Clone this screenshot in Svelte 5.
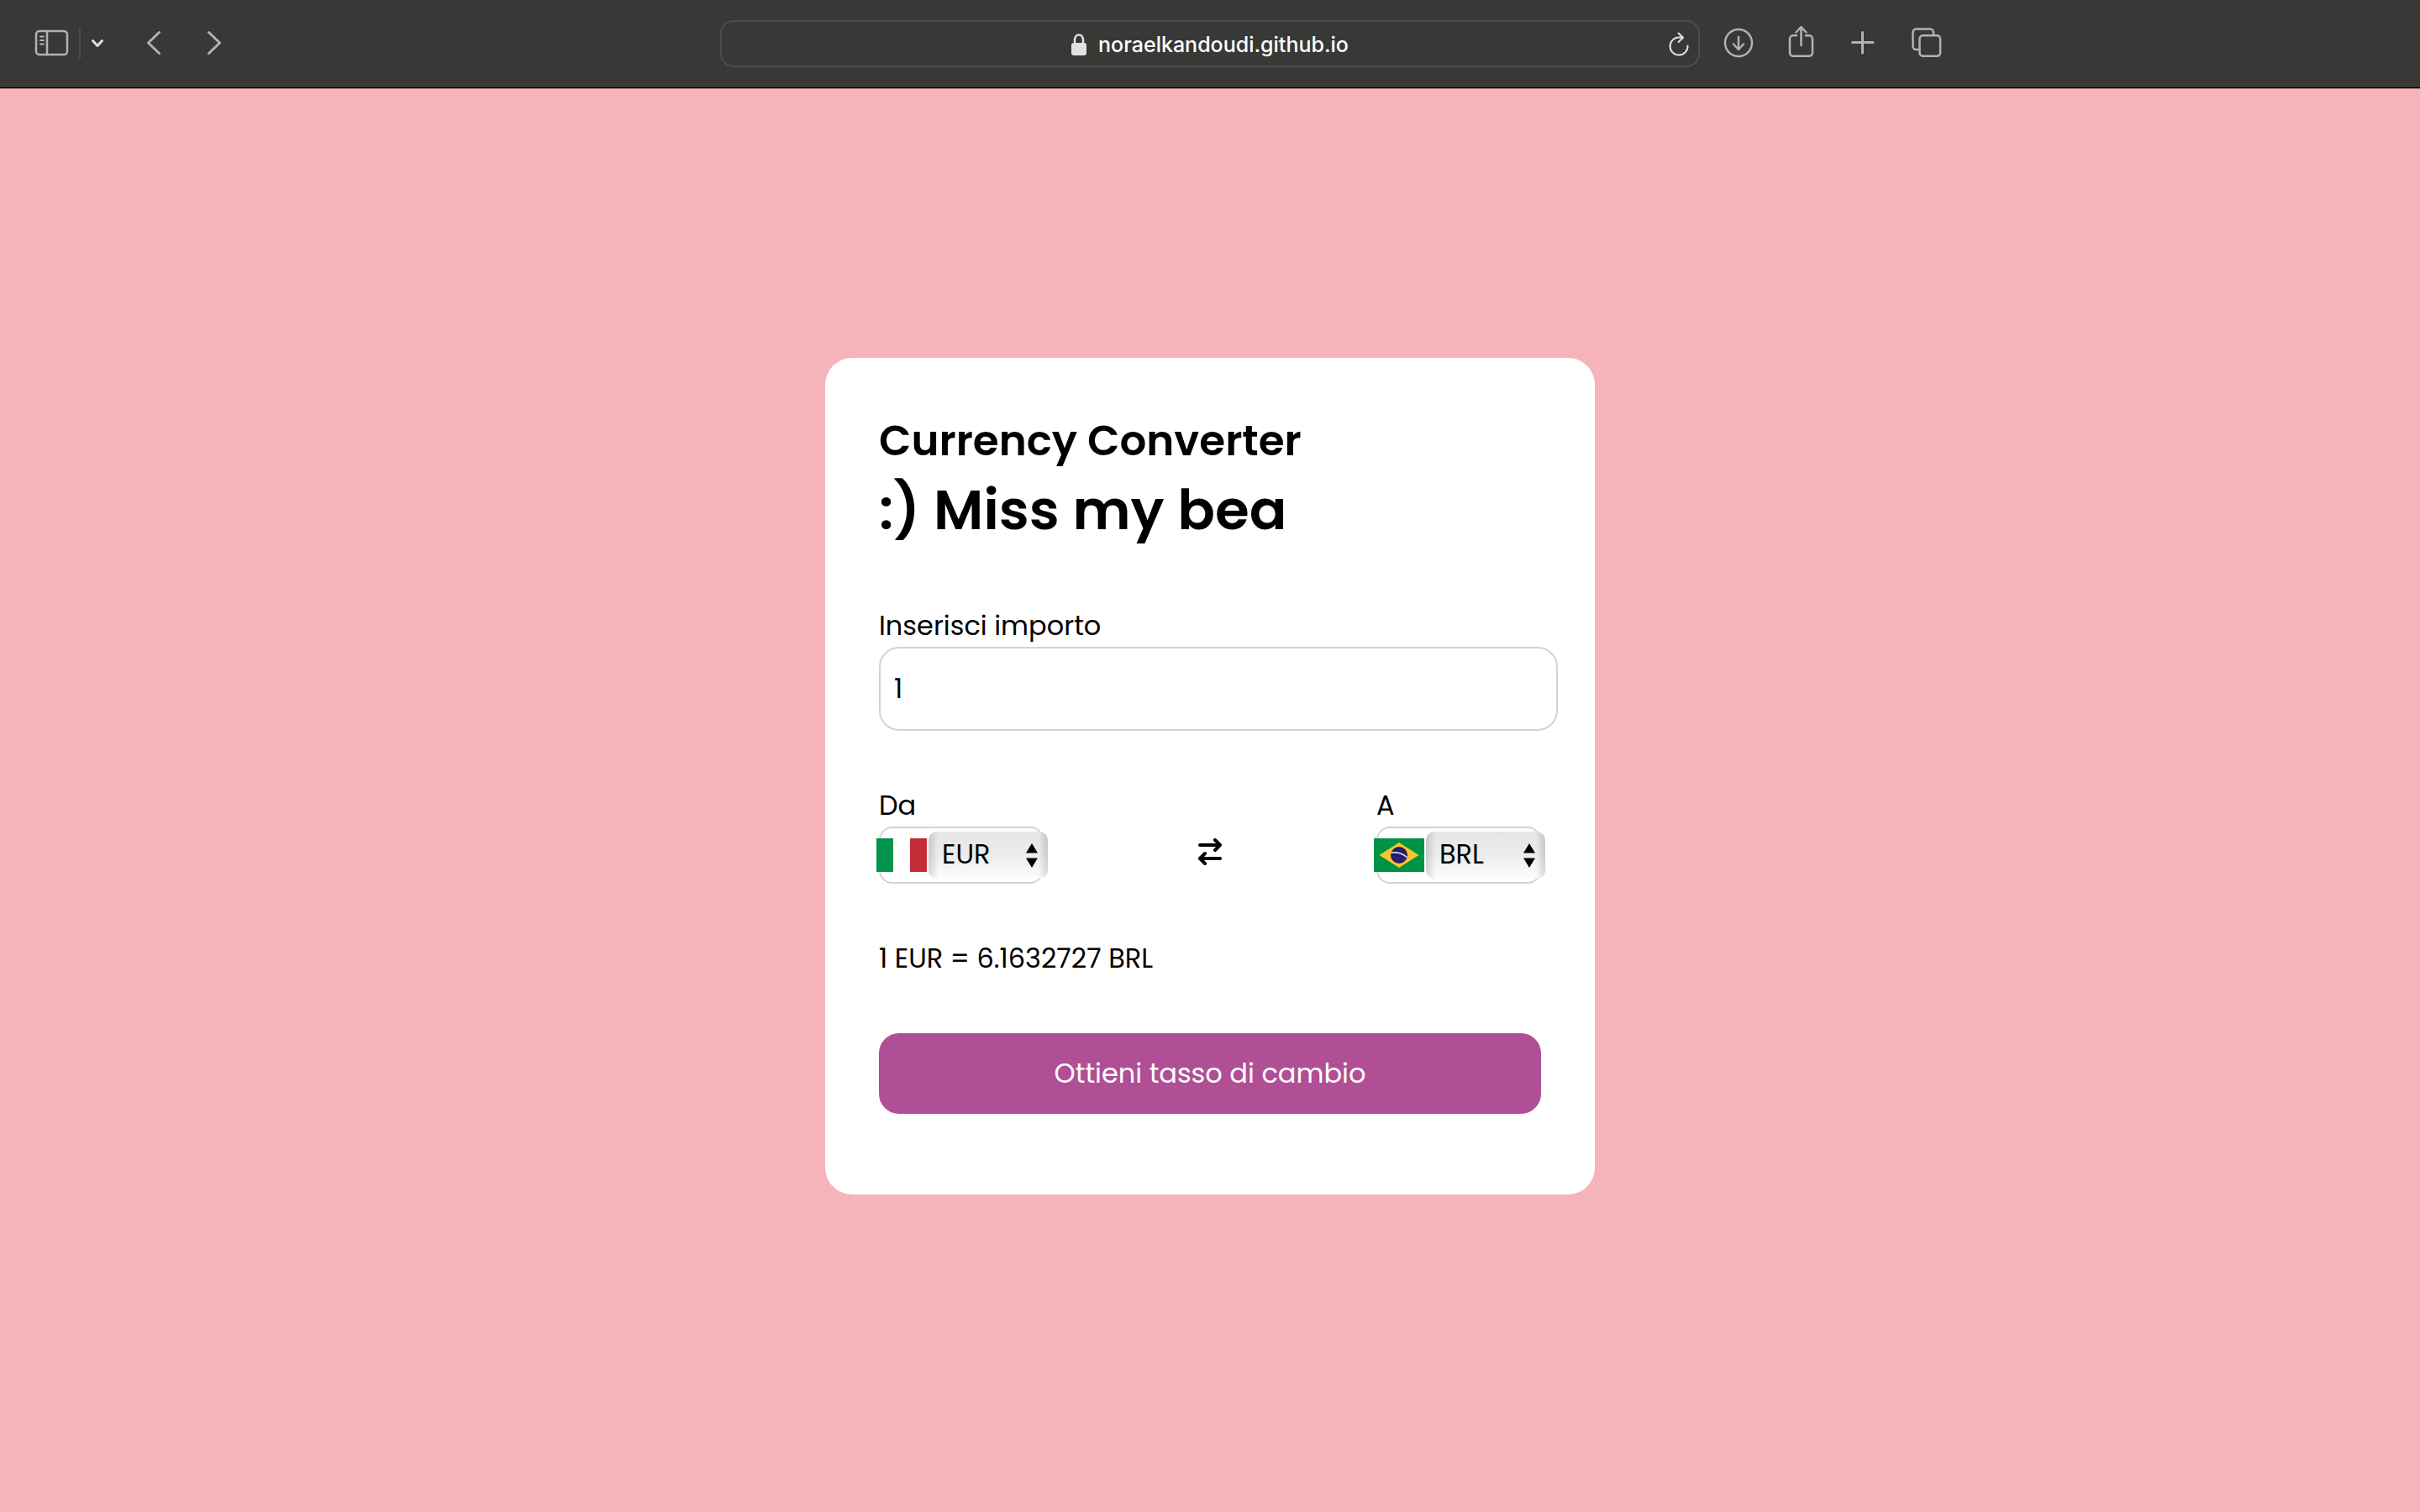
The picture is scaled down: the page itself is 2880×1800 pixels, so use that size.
<script>
  const currencies = ['EUR', 'BRL', 'USD', 'GBP', 'JPY'];
  const rate = '6.1632727';

  let amount = $state('1');
  let from = $state('EUR');
  let to = $state('BRL');
</script>

{#snippet flag(code)}
  <svg class="flag" viewBox="0 0 60 40" aria-hidden="true">
    {#if code === 'BRL'}
      <rect width="60" height="40" fill="#009346" />
      <path d="M6.5 20 30 5l23.5 15L30 35z" fill="#fbc42d" />
      <circle cx="30" cy="20" r="10" fill="#271a6c" />
      <path d="M20.3 17.2c7-1.2 14.2 1 19.2 5.6" fill="none" stroke="#b9e0dd" stroke-width="1.7" />
      <g fill="#6a64a0">
        <circle cx="24" cy="22" r=".6" /><circle cx="27" cy="24" r=".6" /><circle cx="31" cy="24" r=".6" />
        <circle cx="34" cy="26" r=".6" /><circle cx="29" cy="27" r=".6" /><circle cx="36" cy="24" r=".6" />
      </g>
    {:else}
      <rect width="20" height="40" fill="#00934b" />
      <rect x="20" width="20" height="40" fill="#fff" />
      <rect x="40" width="20" height="40" fill="#c42c38" />
    {/if}
  </svg>
{/snippet}

{#snippet arrows()}
  <svg class="arrows" viewBox="0 0 14 30" aria-hidden="true">
    <path d="M7 1 14 12.500H0zM0 18.500h14L7 30z" fill="#000" />
  </svg>
{/snippet}

<div class="window">
  <header>
    <nav class="left" aria-label="Navigazione">
      <button aria-label="Barra laterale">
        <svg width="44" height="44" viewBox="0 0 44 44">
          <rect x="3" y="7" width="37" height="28" rx="4" />
          <path d="M16 7v28" />
          <path d="M8 13.500h4M8 18h4M8 22.500h4" stroke-width="2" />
        </svg>
      </button>
      <span class="rule"></span>
      <button class="bright" aria-label="Gruppi di pannelli">
        <svg class="bold" width="16" height="44" viewBox="0 0 16 44"><path d="m2.500 18.500 5.500 6 5.500-6" /></svg>
      </button>
      <button class="back" aria-label="Indietro">
        <svg class="bold" width="20" height="44" viewBox="0 0 20 44"><path d="M16.500 8.500 3.500 21l13 12.500" /></svg>
      </button>
      <button class="forward" aria-label="Avanti">
        <svg class="bold" width="20" height="44" viewBox="0 0 20 44"><path d="m3.500 8.500 13 12.500-13 12.500" /></svg>
      </button>
    </nav>

    <div class="address">
      <a class="site" href="https://noraelkandoudi.github.io">
        <svg width="18" height="26" viewBox="0 0 18 26" aria-hidden="true">
          <path d="M4 12V7.500C4 4 6 1.500 9 1.500s5 2.500 5 6V12" />
          <rect x="0" y="11" width="18" height="15" rx="3" fill="#e1e1e1" stroke="none" />
        </svg>
        noraelkandoudi.github.io
      </a>
      <button class="bright reload" aria-label="Ricarica">
        <svg width="26" height="44" viewBox="0 0 26 44">
          <path d="M23.500 24.500A10.500 10.500 0 1 1 13 14.500h4.500M12.500 9.500l5.500 5.200-5.500 5.300" stroke-width="2" />
        </svg>
      </button>
    </div>

    <nav class="right" aria-label="Strumenti">
      <button aria-label="Download">
        <svg width="40" height="44" viewBox="0 0 40 44">
          <circle cx="20" cy="21" r="16" />
          <path d="M20 14v15M14 22.500l6 6.500 6-6.500" />
        </svg>
      </button>
      <button aria-label="Condividi">
        <svg width="40" height="44" viewBox="0 0 40 44">
          <path d="M15 12.200h-4a4 4 0 0 0-4 4v16.600a4 4 0 0 0 4 4h19a4 4 0 0 0 4-4V16.200a4 4 0 0 0-4-4h-4M20.500 24V2.500M14.500 8.500l6-6.500 6 6.500" />
        </svg>
      </button>
      <button aria-label="Nuovo pannello">
        <svg class="bold" width="40" height="44" viewBox="0 0 40 44"><path d="M7.500 20.500h24.500M19.500 8.500v24.500" /></svg>
      </button>
      <button aria-label="Panoramica pannelli">
        <svg width="40" height="44" viewBox="0 0 40 44">
          <rect x="13.500" y="12.200" width="24.600" height="24.600" rx="4" />
          <path d="M13 29h-3.500a4 4 0 0 1-4-4V8.500a4 4 0 0 1 4-4h16.500a4 4 0 0 1 4 4V12" />
        </svg>
      </button>
    </nav>
  </header>

  <main>
    <form class="card" onsubmit={(e) => e.preventDefault()}>
      <h2>Currency Converter</h2>
      <h1>:) Miss my bea</h1>

      <div class="amount">
        <label for="amount">Inserisci importo</label>
        <input id="amount" type="text" inputmode="decimal" bind:value={amount} />
      </div>

      <div class="pair">
        <div class="side">
          <label for="from">Da</label>
          <div class="box">
            {@render flag(from)}
            <div class="picker">
              <select id="from" bind:value={from}>
                {#each currencies as c}<option value={c}>{c}</option>{/each}
              </select>
              {@render arrows()}
            </div>
          </div>
        </div>

        <button class="swap" type="button" aria-label="Inverti valute" onclick={() => ([from, to] = [to, from])}>
          <svg width="28" height="32" viewBox="0 0 28 32">
            <path d="M2 8h24M20 2l6 6-6 6M26 24H2M8 18l-6 6 6 6" />
          </svg>
        </button>

        <div class="side">
          <label for="to">A</label>
          <div class="box">
            {@render flag(to)}
            <div class="picker">
              <select id="to" bind:value={to}>
                {#each currencies as c}<option value={c}>{c}</option>{/each}
              </select>
              {@render arrows()}
            </div>
          </div>
        </div>
      </div>

      <p>{amount} {from} = {rate} {to}</p>

      <button class="submit" type="submit">Ottieni tasso di cambio</button>
    </form>
  </main>
</div>

<style>
  :global(body) {
    background: #f5b4b9;
  }
  .window {
    display: flex;
    flex-direction: column;
    min-height: 100vh;
    font-family: Poppins, Inter, 'Liberation Sans', sans-serif;
    color: #000;
  }
  button {
    display: flex;
    padding: 0;
    border: 0;
    background: none;
    font: inherit;
  }

  header {
    display: grid;
    grid-template-columns: 1fr minmax(0, 1166px) 1fr;
    align-items: center;
    height: 104px;
    background: #383836;
    border-bottom: 1px solid #000;
    box-shadow: 0 1px #a87b7e;
  }
  header svg {
    fill: none;
    stroke: #b2b2b1;
    stroke-width: 2.5;
    stroke-linecap: round;
    stroke-linejoin: round;
  }
  header .bold {
    stroke-width: 3;
  }
  .bright svg,
  .site svg {
    stroke: #e1e1e1;
  }
  .left,
  .right {
    display: flex;
    align-items: center;
  }
  .left {
    padding-left: 40px;
  }
  .rule {
    width: 2px;
    height: 36px;
    margin: 0 12px 0 10px;
    background: #4b4b49;
  }
  .back {
    margin-left: 49px;
  }
  .forward {
    margin-left: 52px;
  }
  .right {
    padding-left: 26px;
    gap: 34px;
  }
  .address {
    display: grid;
    grid-template-columns: 26px 1fr 26px;
    align-items: center;
    height: 56px;
    padding: 0 10px;
    box-sizing: border-box;
    border: 2px solid #4d4d4b;
    border-radius: 16px;
  }
  .site {
    grid-column: 2;
    display: flex;
    justify-content: center;
    align-items: center;
    gap: 14px;
    padding-top: 2px;
    color: #fff;
    font-family: Inter, sans-serif;
    font-size: 25px;
    font-weight: 500;
    text-decoration: none;
  }

  main {
    flex: 1;
    display: flex;
    justify-content: center;
    align-items: center;
    padding-bottom: 58px;
  }
  .card {
    width: 916px;
    max-width: 100%;
    box-sizing: border-box;
    padding: 64px 64px 96px;
    border-radius: 32px;
    background: #fff;
    font-size: 32px;
    line-height: 46px;
  }
  h1,
  h2,
  p {
    margin: 0;
  }
  h1,
  h2 {
    font-weight: 600;
  }
  h2 {
    font-size: 50px;
    line-height: 70px;
  }
  h1 {
    font-size: 66px;
    line-height: 94px;
  }
  label {
    display: block;
    margin-bottom: 2px;
  }
  .amount {
    margin: 68px 0 66px;
  }
  input {
    display: block;
    width: 100%;
    height: 96px;
    padding: 0 0 0 16px;
    border: 2px solid #d3d3d3;
    border-radius: 24px;
    background: #fff;
    color: #000;
    font: inherit;
  }
  .pair {
    display: flex;
    justify-content: space-between;
    align-items: flex-end;
    margin-bottom: 66px;
  }
  .box {
    display: flex;
    justify-content: center;
    align-items: center;
    gap: 2px;
    width: 190px;
    height: 64px;
    padding-left: 2px;
    border: 2px solid #d3d3d3;
    border-radius: 16px;
  }
  .flag {
    flex: none;
    width: 60px;
    height: 40px;
  }
  .picker {
    flex: none;
    display: grid;
    align-items: center;
    width: 142px;
  }
  select {
    grid-area: 1 / 1;
    appearance: none;
    height: 56px;
    padding: 0 32px 2px 16px;
    border: 0;
    border-radius: 10px;
    background:
      linear-gradient(90deg, rgb(0 0 0 / 14%), transparent 8%, transparent 92%, rgb(0 0 0 / 14%)),
      linear-gradient(#e5e5e5, #ececec 50%, #fdfdfd);
    color: #000;
    font: inherit;
  }
  .arrows {
    grid-area: 1 / 1;
    justify-self: end;
    width: 14px;
    height: 30px;
    margin-right: 12px;
    pointer-events: none;
  }
  .swap {
    padding-bottom: 22px;
  }
  .swap svg {
    fill: none;
    stroke: #000;
    stroke-width: 4;
    stroke-linecap: round;
    stroke-linejoin: round;
  }
  .submit {
    justify-content: center;
    align-items: center;
    width: 100%;
    height: 96px;
    margin-top: 66px;
    border-radius: 24px;
    background: #b04f95;
    color: #fff;
  }
</style>
